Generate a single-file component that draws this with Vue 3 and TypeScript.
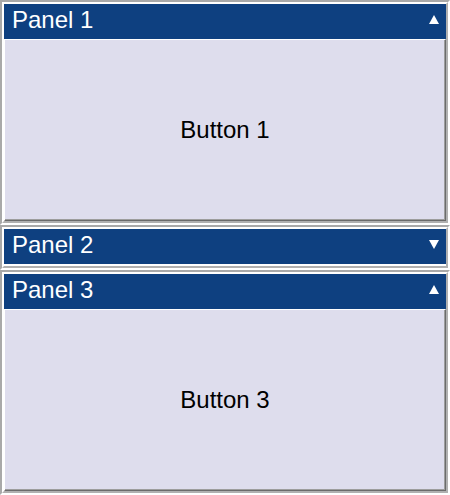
<script setup lang="ts">
import { reactive } from 'vue'

interface Panel {
  id: number
  title: string
  action: string
  open: boolean
}

const panels = reactive<Panel[]>([
  { id: 1, title: 'Panel 1', action: 'Button 1', open: true },
  { id: 2, title: 'Panel 2', action: 'Button 2', open: false },
  { id: 3, title: 'Panel 3', action: 'Button 3', open: true },
])
</script>

<template>
  <main class="stack">
    <section v-for="panel in panels" :key="panel.id" class="panel">
      <div class="inner">
        <button
          type="button"
          class="header"
          :aria-expanded="panel.open"
          @click="panel.open = !panel.open"
        >
          <span>{{ panel.title }}</span>
          <svg class="arrow" viewBox="0 0 10 9" aria-hidden="true">
            <path v-if="panel.open" d="M5 0L10 9H0Z" />
            <path v-else d="M0 0H10L5 9Z" />
          </svg>
        </button>
        <button v-if="panel.open" type="button" class="content">{{ panel.action }}</button>
        <div v-else class="closed"></div>
      </div>
    </section>
  </main>
</template>

<style>
body {
  background: #ffffff;
}
</style>

<style scoped>
.stack {
  display: flex;
  flex-direction: column;
  font-family: "Liberation Sans", Arial, sans-serif;
}

.panel {
  border: 2px solid;
  border-color: #a9a9a9 #ffffff #ffffff #a9a9a9;
}

.inner {
  display: flex;
  flex-direction: column;
  border: 2px solid;
  border-color: #ffffff #b0b0b0 #b0b0b0 #ffffff;
}

.header,
.content {
  box-sizing: border-box;
  width: 100%;
  margin: 0;
  font-family: inherit;
  font-size: 24px;
  line-height: 28px;
  border-radius: 0;
}

.header {
  display: flex;
  align-items: center;
  justify-content: space-between;
  height: 35px;
  padding: 0 7px 4px 8px;
  border: 0;
  background: #0e4080;
  color: #ffffff;
  text-align: left;
}

.arrow {
  width: 10px;
  height: 9px;
  fill: #ffffff;
}

.content {
  height: 182px;
  padding: 0;
  border: 1px solid;
  border-color: #ffffff #6b6b6b #6b6b6b #ffffff;
  box-shadow: inset -1px -1px #9d9d9d;
  background: #dedded;
  color: #000000;
}

.closed {
  height: 2px;
  background: #ffffff;
}
</style>
